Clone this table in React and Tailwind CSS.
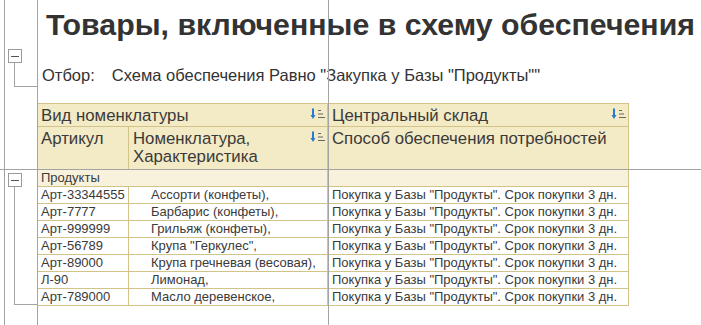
import React from "react";

const rows = [
  ["Арт-33344555", "Ассорти (конфеты),"],
  ["Арт-7777", "Барбарис (конфеты),"],
  ["Арт-999999", "Грильяж (конфеты),"],
  ["Арт-56789", "Крупа \"Геркулес\","],
  ["Арт-89000", "Крупа гречневая (весовая),"],
  ["Л-90", "Лимонад,"],
  ["Арт-789000", "Масло деревенское,"],
];

const method = "Покупка у Базы \"Продукты\". Срок покупки 3 дн.";

function SortIcon() {
  return (
    <svg width="16" height="12" viewBox="0 0 16 12" className="shrink-0 mt-[1px]">
      <path d="M3 0.5v7" stroke="#2a7ad0" strokeWidth="2" />
      <path d="M0.5 7h5L3 11z" fill="#2a7ad0" />
      <path d="M8 2.5h3M8 6h5M8 9.5h7" stroke="#666" strokeWidth="1" />
    </svg>
  );
}

function Minus({ className }) {
  return (
    <div
      className={`absolute w-[14px] h-[14px] border border-[#9a9a9a] bg-white flex items-center justify-center ${className}`}
    >
      <div className="w-[8px] h-px bg-[#555]" />
    </div>
  );
}

export default function App() {
  return (
    <div
      className="relative w-[701px] h-[325px] overflow-hidden bg-white text-[#333]"
      style={{ fontFamily: '"Liberation Sans", Arial, sans-serif' }}
    >
      {/* Title */}
      <div className="pl-[46px] pt-[8px] h-[44px] text-[30.3px] leading-[34px] font-bold whitespace-nowrap">
        Товары, включенные в схему обеспечения
      </div>

      {/* Filter */}
      <div className="mt-[21px] pl-[42px] text-[16.5px] leading-[20px] whitespace-nowrap">
        <span>Отбор:</span>
        <span className="ml-[17px]">
          Схема обеспечения Равно "Закупка у Базы "Продукты""
        </span>
      </div>

      {/* Table */}
      <div className="mt-[18px] ml-[37px] w-[592px] text-[#3a3a3a]">
        <div className="grid grid-cols-[92px_199px_301px] bg-[#f3eac6] border-t border-[#d2c488] text-[16.8px]">
          <div className="col-span-2 h-[23px] border-b border-r border-[#d2c488] flex justify-between pl-[4px] pr-[1px] pt-[3px] leading-[18px]">
            <span>Вид номенклатуры</span>
            <SortIcon />
          </div>
          <div className="h-[23px] border-b border-r border-[#d2c488] flex justify-between pl-[4px] pr-[1px] pt-[3px] leading-[18px]">
            <span>Центральный склад</span>
            <SortIcon />
          </div>
          <div className="h-[43px] border-b border-r border-[#d2c488] pl-[4px] pt-[3px] leading-[18px]">
            Артикул
          </div>
          <div className="h-[43px] border-b border-r border-[#d2c488] flex justify-between pl-[4px] pr-[1px] pt-[3px] leading-[18px]">
            <span>
              Номенклатура,
              <br />
              Характеристика
            </span>
            <SortIcon />
          </div>
          <div className="h-[43px] border-b border-r border-[#d2c488] pl-[4px] pt-[3px] leading-[18px] whitespace-nowrap">
            Способ обеспечения потребностей
          </div>
        </div>

        <div className="grid grid-cols-[291px_301px] bg-[#f8f2dd]">
          <div className="h-[17px] border-b border-r border-[#d2c488] pl-[4px] text-[13px] leading-[16px]">
            Продукты
          </div>
          <div className="h-[17px] border-b border-r border-[#d2c488]" />
        </div>

        {rows.map(([art, name]) => (
          <div
            key={art}
            className="grid grid-cols-[92px_199px_301px] text-[13px] leading-[16px]"
          >
            <div className="h-[17px] border-b border-r border-[#d2c488] pl-[4px] whitespace-nowrap">
              {art}
            </div>
            <div className="h-[17px] border-b border-r border-[#d2c488] pl-[22px] whitespace-nowrap">
              {name}
            </div>
            <div className="h-[17px] border-b border-r border-[#d2c488] pl-[4px] whitespace-nowrap">
              {method}
            </div>
          </div>
        ))}
      </div>

      {/* Sheet grouping lines */}
      <div className="absolute left-[4px] top-0 w-px h-full bg-[#a3a3a3]" />
      <div className="absolute left-[37px] top-0 w-px h-full bg-[#a3a3a3]" />
      <div className="absolute left-[328px] top-0 w-px h-full bg-[#a3a3a3]" />
      <div className="absolute left-0 top-[169px] w-full h-px bg-[#a3a3a3]" />

      {/* Tree outline */}
      <Minus className="left-[8px] top-[49px]" />
      <div className="absolute left-[14px] top-[63px] w-px h-[23px] bg-[#a3a3a3]" />
      <div className="absolute left-[14px] top-[86px] w-[23px] h-px bg-[#a3a3a3]" />
      <Minus className="left-[8px] top-[173px]" />
      <div className="absolute left-[14px] top-[187px] w-px h-[117px] bg-[#a3a3a3]" />
      <div className="absolute left-[14px] top-[304px] w-[23px] h-px bg-[#a3a3a3]" />
    </div>
  );
}
